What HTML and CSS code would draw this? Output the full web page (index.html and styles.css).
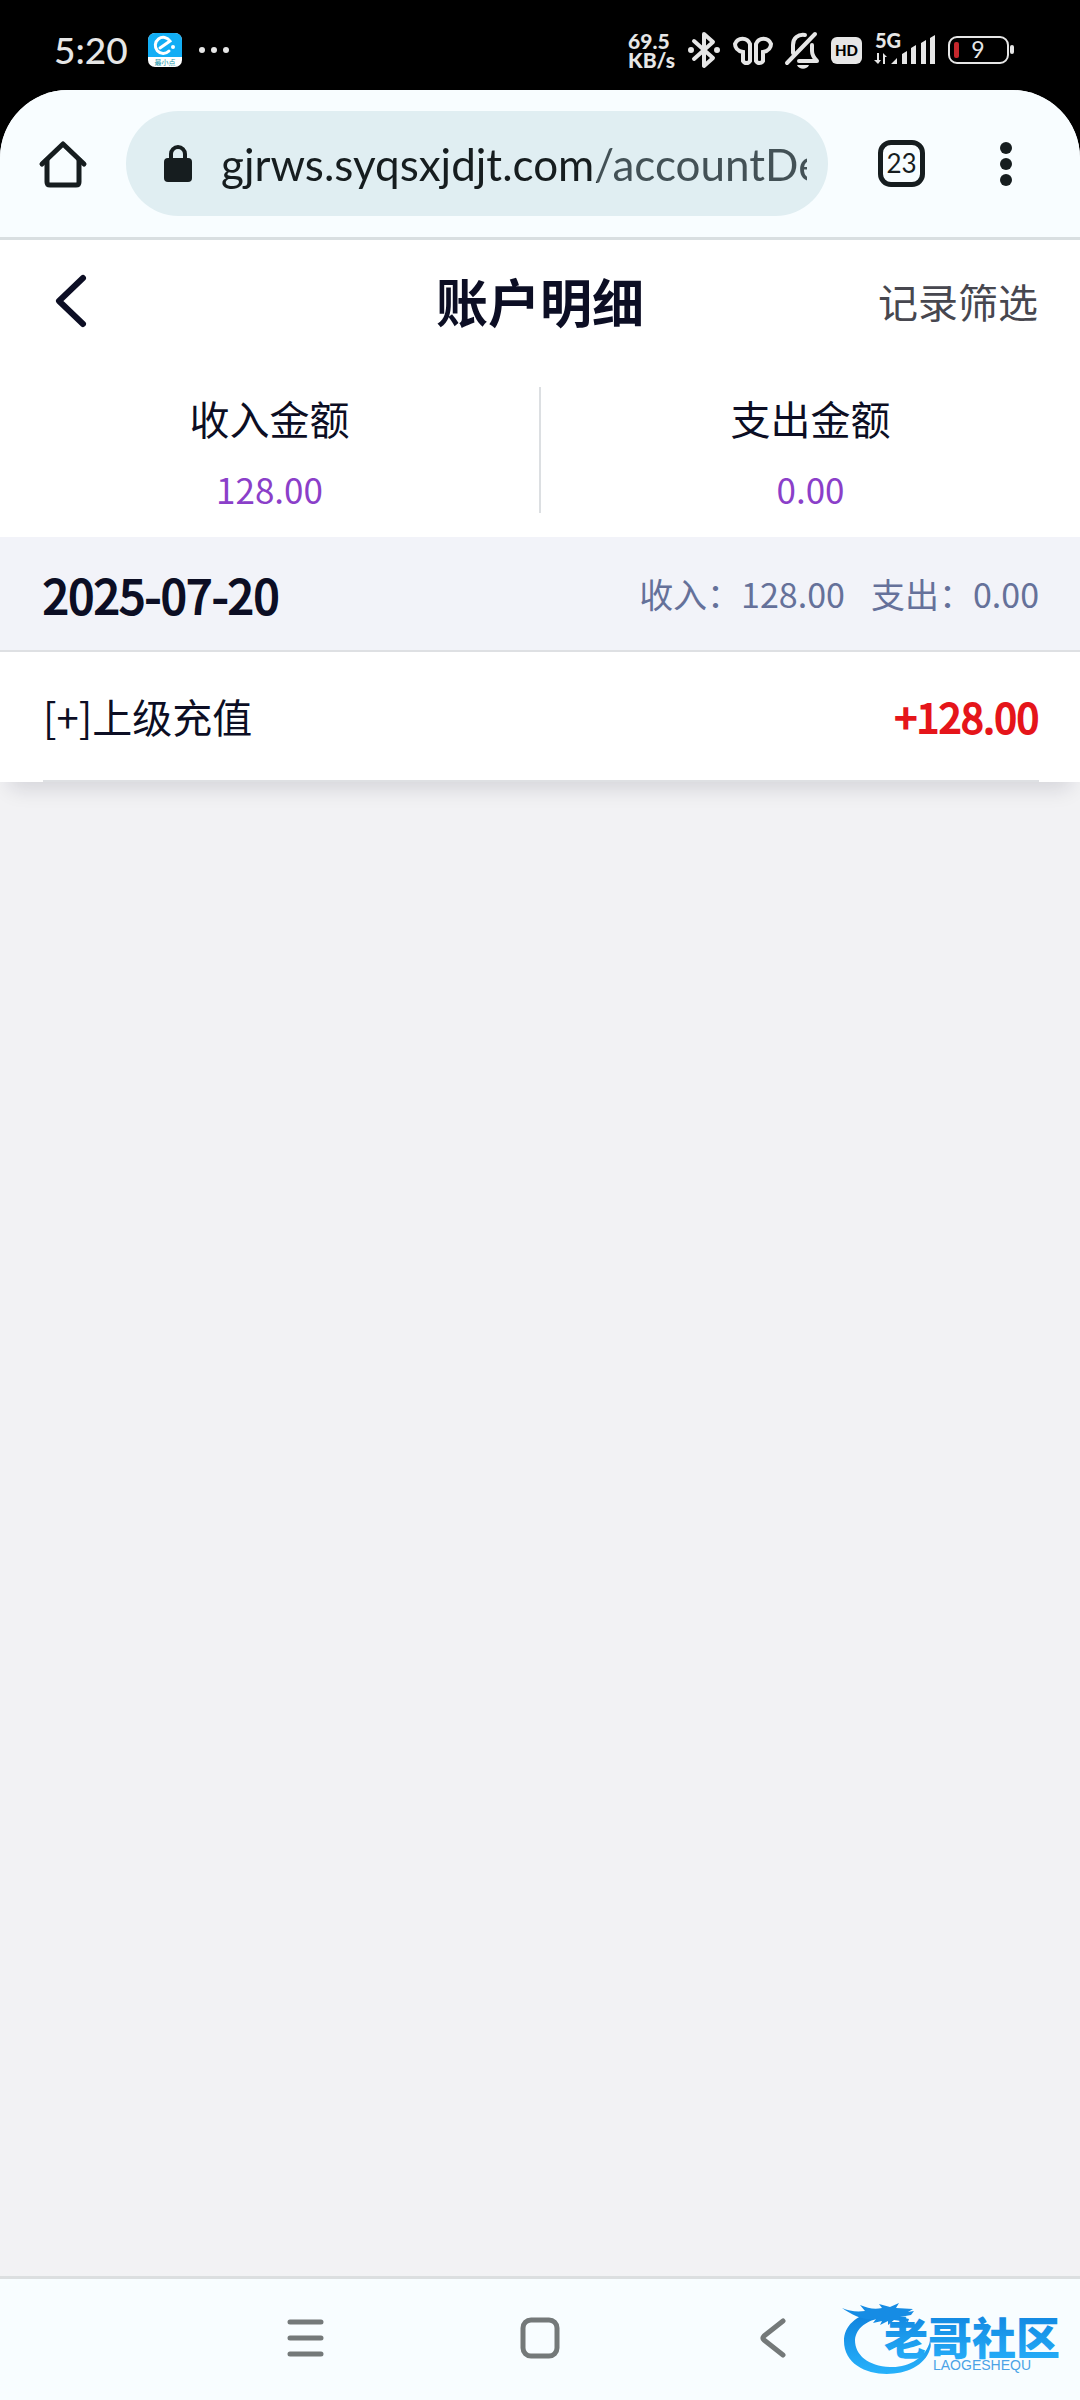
FILE: index.html
```html
<!DOCTYPE html>
<html lang="zh-CN">
<head>
    <meta charset="UTF-8">
    <meta name="viewport" content="width=device-width, initial-scale=1.0">
    <title>账户明细</title>
    <link rel="stylesheet" href="styles.css">
</head>
<body>
    <div class="status-bar">
        <span class="clock">5:20</span>
        <svg class="app-icon" width="34" height="34" viewBox="0 0 34 34">
            <rect width="34" height="34" rx="7" fill="#fff"/>
            <path d="M0 24V7a7 7 0 0 1 7-7h20a7 7 0 0 1 7 7v17z" fill="#12aef5"/>
            <path d="M12 15L22 8A8 8 0 1 0 21 18" fill="none" stroke="#fff" stroke-width="3" stroke-linecap="round"/>
            <circle cx="25" cy="14" r="2" fill="#fff"/>
            <text x="17" y="32" font-size="7" text-anchor="middle" fill="#1793a8">最小点</text>
        </svg>
        <svg width="32" height="8" viewBox="0 0 32 8" fill="#e6e6e6">
            <circle cx="4" cy="4" r="3"/><circle cx="16" cy="4" r="3"/><circle cx="28" cy="4" r="3"/>
        </svg>
        <div class="status-right">
            <span class="net-speed">69.5<br>KB/s</span>
            <svg width="34" height="38" viewBox="0 0 34 38" fill="none" stroke="#e6e6e6" stroke-width="4" stroke-linejoin="round" stroke-linecap="round">
                <path d="M7 10l19 17-9 8V3l9 8L7 28"/>
                <circle cx="4" cy="19" r="2" fill="#e6e6e6" stroke-width="2"/>
                <circle cx="30" cy="19" r="2" fill="#e6e6e6" stroke-width="2"/>
            </svg>
            <svg width="40" height="34" viewBox="0 0 40 34" fill="none" stroke="#e6e6e6" stroke-width="4">
                <path d="M17 11v17a4 4 0 0 1-7 0v-9C4 18 2 14 2 11a8 8 0 0 1 15 0z"/>
                <path d="M23 11v17a4 4 0 0 0 7 0v-9c6-1 8-5 8-8a8 8 0 0 0-15 0z"/>
            </svg>
            <svg width="34" height="38" viewBox="0 0 34 38" fill="none" stroke="#e6e6e6" stroke-width="4" stroke-linecap="round">
                <path d="M2 32L30 3"/>
                <path d="M8 22V14c0-7 5-11 12-10"/>
                <path d="M14 30h18c-3-3-5-6-5-10v-6" stroke-linejoin="round"/>
                <path d="M12 34h12c-2 5-10 5-12 0z" fill="#e6e6e6" stroke="none"/>
            </svg>
            <span class="hd-badge">HD</span>
            <svg width="62" height="34" viewBox="0 0 62 34" fill="#e6e6e6">
                <text x="1" y="15" class="signal-text">5G</text>
                <path d="M3 20h2v7h2l-3 4-4-4h3zM9 31V20l4 4h-2v7z"/>
                <path d="M17 31l6-6v6zM28 31V21l5-3v13zM37 31V15l5-3v19zM47 31V10l5-3v24zM56 31V5l5-3v29z"/>
            </svg>
            <svg width="66" height="30" viewBox="0 0 66 30">
                <rect x="1" y="2" width="59" height="26" rx="8" fill="none" stroke="#e6e6e6" stroke-width="2"/>
                <rect x="6" y="7" width="5" height="16" rx="2" fill="#c5272c"/>
                <rect x="62" y="10" width="4" height="9" rx="2" fill="#e6e6e6"/>
                <text x="30" y="23" text-anchor="middle" class="battery-text">9</text>
            </svg>
        </div>
    </div>

    <div class="window">
        <header class="browser-bar">
            <button class="icon-btn" aria-label="主页">
                <svg width="48" height="48" viewBox="0 0 48 48" fill="none" stroke="#161d1f" stroke-width="5" stroke-linejoin="round" stroke-linecap="round">
                    <path d="M3 24L24 4l21 20"/>
                    <path d="M8 20v22q0 3 3 3h26q3 0 3-3V20"/>
                </svg>
            </button>
            <div class="omnibox">
                <svg width="30" height="38" viewBox="0 0 30 38">
                    <rect x="1" y="13" width="28" height="24" rx="4" fill="#161d1f"/>
                    <path d="M8 14V9a7 7 0 0 1 14 0v5" fill="none" stroke="#161d1f" stroke-width="4"/>
                </svg>
                <input class="url" type="text" aria-label="网址" value="gjrws.syqsxjdjt.com/accountDe">
            </div>
            <button class="tabs-btn">23</button>
            <button class="icon-btn" aria-label="菜单">
                <svg width="12" height="44" viewBox="0 0 12 44" fill="#161d1f">
                    <circle cx="6" cy="6" r="6"/><circle cx="6" cy="22" r="6"/><circle cx="6" cy="38" r="6"/>
                </svg>
            </button>
        </header>

        <div class="title-bar">
            <button class="icon-btn back-btn" aria-label="返回">
                <svg width="32" height="52" viewBox="0 0 32 52" fill="none" stroke="#0c0e24" stroke-width="6" stroke-linejoin="round" stroke-linecap="round">
                    <path d="M28 3L4 26l24 23"/>
                </svg>
            </button>
            <h1>账户明细</h1>
            <a href="#" class="filter">记录筛选</a>
        </div>

        <section class="summary">
            <div class="summary-item">
                <div class="summary-label">收入金额</div>
                <div class="summary-amount">128.00</div>
            </div>
            <div class="summary-item">
                <div class="summary-label">支出金额</div>
                <div class="summary-amount">0.00</div>
            </div>
        </section>

        <main class="records">
            <div class="day-head">
                <h2>2025-07-20</h2>
                <div class="day-total">
                    <span>收入：128.00</span>
                    <span>支出：0.00</span>
                </div>
            </div>
            <ul>
                <li>
                    <span>[+]上级充值</span>
                    <span class="amount">+128.00</span>
                </li>
            </ul>
        </main>
    </div>

    <nav class="nav-bar">
        <button class="icon-btn" aria-label="最近任务">
            <svg width="38" height="40" viewBox="0 0 38 40" stroke="#747979" stroke-width="5" stroke-linecap="round">
                <path d="M3 4h31M3 20h31M3 36h31"/>
            </svg>
        </button>
        <button class="icon-btn" aria-label="主屏幕">
            <svg width="40" height="40" viewBox="0 0 40 40" fill="none" stroke="#747979" stroke-width="5">
                <rect x="3" y="2" width="34" height="36" rx="8"/>
            </svg>
        </button>
        <button class="icon-btn" aria-label="后退">
            <svg width="38" height="40" viewBox="0 0 38 40" fill="none" stroke="#747979" stroke-width="5" stroke-linecap="round" stroke-linejoin="round">
                <path d="M28 3L9 18q-2 2 0 4l19 15"/>
            </svg>
        </button>
        <svg class="logo" width="224" height="76" viewBox="0 0 224 76">
            <defs>
                <linearGradient id="blue" x1="0" y1="0" x2="0" y2="1">
                    <stop offset="0" stop-color="#0f80dc"/>
                    <stop offset="1" stop-color="#27b2fb"/>
                </linearGradient>
            </defs>
            <path d="M34 9C14 13 2 24 2 39c0 42 76 43 86 8 1-3 1-5 0-8-4 17-22 27-40 26C26 64 13 53 13 38 14 26 25 18 40 16z" fill="url(#blue)"/>
            <path d="M0 6c7 3 14 4 23 3l-5-6c8 3 14 5 22 3l-3-4 11 3 9-4-3 5 17 1-5 3 6-1-3 4-11 2 9 2-1 3-14-2-6 5v-4l-8 4 2-4-9 2 3-4c-12 2-24-4-34-11z" fill="#168ce4"/>
            <text x="42" y="53" class="logo-name">老哥社区</text>
            <text x="91" y="68" class="logo-sub">LAOGESHEQU</text>
        </svg>
    </nav>
</body>
</html>
```

FILE: styles.css
```css
* {
    box-sizing: border-box;
}

body {
    margin: 0;
    min-height: 100vh;
    display: flex;
    flex-direction: column;
    background-color: #000;
    color: #0c0e24;
    font-family: "Noto Sans CJK SC", sans-serif;
    font-size: 40px;
}

h1, h2, ul {
    margin: 0;
    padding: 0;
}

svg {
    display: block;
    flex-shrink: 0;
    overflow: visible;
}

.icon-btn {
    display: flex;
    padding: 0;
    border: none;
    background: none;
    cursor: pointer;
}

/* Status bar */
.status-bar {
    display: flex;
    align-items: center;
    height: 90px;
    padding: 10px 66px 0 54px;
    color: #e6e6e6;
    font-family: Lato, sans-serif;
}

.clock {
    font-size: 37px;
    font-weight: 500;
    line-height: 36px;
}

.app-icon {
    margin: 0 16px 0 20px;
    font-family: "Noto Sans CJK SC", sans-serif;
}

.status-right {
    display: flex;
    align-items: center;
    gap: 12px;
    margin-left: auto;
}

.net-speed {
    font-size: 21px;
    font-weight: 900;
    line-height: 19px;
}

.hd-badge {
    padding: 0 4px;
    border-radius: 6px;
    background-color: #e6e6e6;
    color: #000;
    font-size: 15px;
    font-weight: 900;
    line-height: 27px;
}

.signal-text {
    font-size: 20px;
    font-weight: 900;
}

.battery-text {
    fill: #e6e6e6;
    font-size: 23px;
}

/* Page window */
.window {
    flex: 1;
    overflow: hidden;
    border-radius: 68px 68px 0 0;
    background-color: #f2f2f4;
}

.browser-bar {
    display: flex;
    align-items: center;
    height: 150px;
    padding: 0 68px 0 39px;
    border-bottom: 3px solid #d9dfe1;
    background-color: #f8fdff;
}

.omnibox {
    flex: 1;
    display: flex;
    align-items: center;
    gap: 28px;
    height: 105px;
    margin: 0 50px 0 39px;
    padding: 0 21px 0 37px;
    border-radius: 53px;
    background-color: #e0eef2;
}

/* host dark, path lighter */
.url {
    flex: 1;
    min-width: 0;
    padding: 0;
    border: none;
    outline: none;
    background: linear-gradient(90deg, #161d1f 376px, #435156 376px);
    background-clip: text;
    -webkit-background-clip: text;
    color: transparent;
    font-family: Lato, sans-serif;
    font-size: 44px;
}

.tabs-btn {
    width: 47px;
    height: 47px;
    margin-right: 75px;
    padding: 0;
    border: 5px solid #161d1f;
    border-radius: 13px;
    background: none;
    color: #161d1f;
    font-family: Lato, sans-serif;
    font-size: 26px;
    line-height: 37px;
}

/* Title */
.title-bar {
    display: grid;
    grid-template-columns: 1fr auto 1fr;
    align-items: center;
    height: 121px;
    padding: 0 42px;
    background-color: #fff;
}

.back-btn {
    margin-left: 13px;
}

.title-bar h1 {
    font-size: 52px;
    font-weight: 700;
}

.filter {
    justify-self: end;
    color: #47474f;
    text-decoration: none;
}

/* Summary */
.summary {
    display: flex;
    padding: 26px 0 24px;
    background-color: #fff;
}

.summary-item {
    flex: 1;
    height: 126px;
    text-align: center;
}

.summary-item + .summary-item {
    border-left: 2px solid #dcdfe2;
}

.summary-label {
    line-height: 62px;
}

.summary-amount {
    color: #8b3fc9;
    font-size: 35px;
    line-height: 80px;
}

/* Records */
.records {
    background-color: #fff;
    box-shadow: 0 16px 20px -10px rgba(20, 24, 50, 0.14);
}

.day-head {
    display: flex;
    justify-content: space-between;
    align-items: center;
    height: 115px;
    padding: 0 41px 0 43px;
    border-bottom: 2px solid #dee0e3;
    background-color: #f2f3f9;
}

.day-head h2 {
    font-size: 46px;
    font-weight: 400;
    -webkit-text-stroke: 2px;
}

.day-total {
    display: flex;
    gap: 26px;
    color: #65719a;
    font-size: 34px;
}

.records li {
    display: flex;
    justify-content: space-between;
    align-items: center;
    height: 130px;
    margin: 0 41px 0 43px;
    border-bottom: 2px solid #dee0e3;
}

.amount {
    color: #e5151a;
    font-size: 40px;
    -webkit-text-stroke: 2px;
}

/* System navigation */
.nav-bar {
    position: relative;
    display: flex;
    justify-content: center;
    gap: 195px;
    height: 124px;
    padding-top: 39px;
    border-top: 3px solid #dcdfe0;
    background-color: #f8fdff;
}

.logo {
    position: absolute;
    right: 14px;
    bottom: 22px;
}

.logo-name {
    fill: url(#blue);
    font-size: 44px;
    font-weight: 900;
}

.logo-sub {
    fill: #4aa3e6;
    font-family: "Liberation Sans", sans-serif;
    font-size: 14px;
}
```
